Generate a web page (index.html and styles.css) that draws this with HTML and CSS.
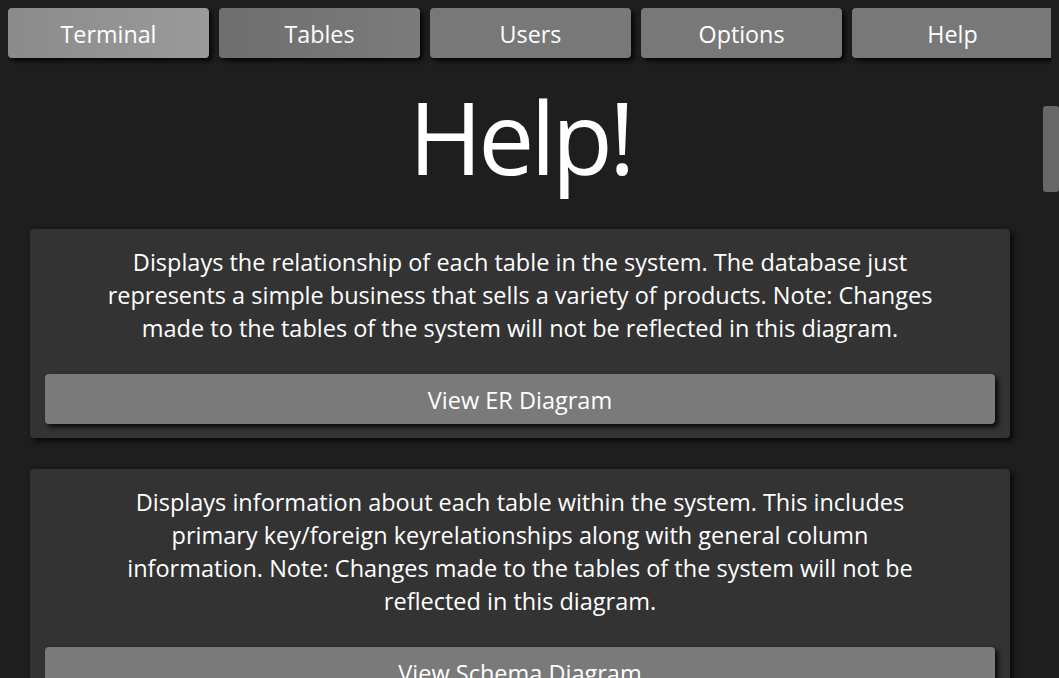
FILE: index.html
```html
<!DOCTYPE html>
<html lang="en">
<head>
<meta charset="utf-8">
<title>Help</title>
<link rel="stylesheet" href="styles.css">
</head>
<body>
<nav class="nav">
  <button class="nav-btn nav-btn--active">Terminal</button>
  <button class="nav-btn nav-btn--tables">Tables</button>
  <button class="nav-btn">Users</button>
  <button class="nav-btn">Options</button>
  <button class="nav-btn">Help</button>
</nav>
<main class="main">
  <h1 class="title">Help!</h1>
  <section class="card">
    <p class="card-text">Displays the relationship of each table in the system. The database just<br>represents a simple business that sells a variety of products. Note: Changes<br>made to the tables of the system will not be reflected in this diagram.</p>
    <button class="card-btn">View ER Diagram</button>
  </section>
  <section class="card">
    <p class="card-text">Displays information about each table within the system. This includes<br>primary key/foreign keyrelationships along with general column<br>information. Note: Changes made to the tables of the system will not be<br>reflected in this diagram.</p>
    <button class="card-btn">View Schema Diagram</button>
  </section>
</main>
<div class="scroll-thumb"></div>
</body>
</html>
```

FILE: styles.css
```css
html, body {
  height: 678px;
  overflow: hidden;
}
body {
  margin: 8px;
  background: #1e1e1e;
  color: #ffffff;
  font-family: "Open Sans", "Noto Sans", sans-serif;
}
.nav {
  display: grid;
  grid-template-columns: repeat(5, 201px);
  gap: 10px;
}
.nav-btn {
  height: 50px;
  border: none;
  border-radius: 4px;
  background: #787878;
  color: #ffffff;
  font-family: inherit;
  font-size: 23.3px;
  padding: 2px 0 0;
  box-shadow: 3px 3px 5px rgba(0, 0, 0, 0.85);
}
.nav-btn--active {
  background: linear-gradient(90deg, #8b8b8b, #9a9a9a);
}
.nav-btn--tables {
  background: linear-gradient(90deg, #6e6e6e, #7b7b7b);
}
.main {
  width: 980px;
  margin-left: 22px;
}
.title {
  margin: 28px 0 43px;
  text-align: center;
  font-weight: 400;
  font-size: 100px;
  line-height: 100px;
  letter-spacing: -4px;
}
.card {
  background: #333333;
  border-radius: 4px;
  padding: 17px 15px 14px;
  margin-bottom: 31px;
  box-shadow: 3px 3px 6px rgba(0, 0, 0, 0.8);
}
.card-text {
  margin: 0 0 29px;
  text-align: center;
  font-size: 23.5px;
  line-height: 33px;
}
.card-btn {
  display: block;
  width: 100%;
  height: 50px;
  border: none;
  border-radius: 4px;
  background: #7a7a7a;
  color: #ffffff;
  font-family: inherit;
  font-size: 23.5px;
  padding: 2px 0 0;
  box-shadow: 3px 3px 5px rgba(0, 0, 0, 0.85);
}
.scroll-thumb {
  position: absolute;
  left: 1043px;
  top: 106px;
  width: 16px;
  height: 86px;
  background: #676767;
  border-radius: 3px;
}
```
